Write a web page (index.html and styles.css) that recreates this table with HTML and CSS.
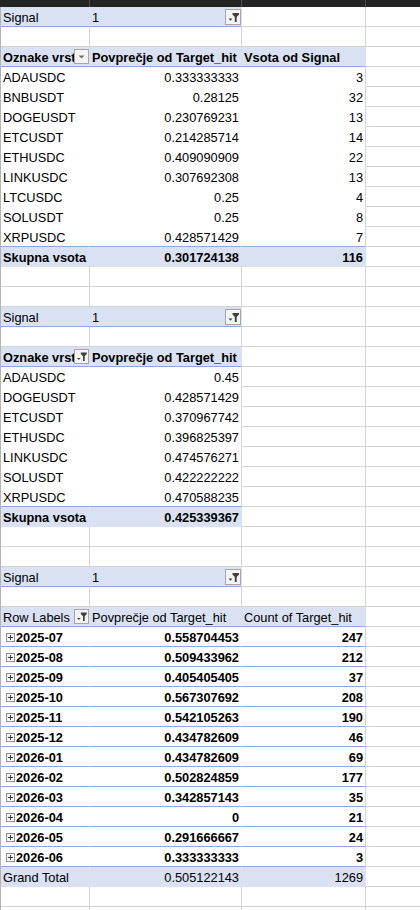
FILE: index.html
```html
<!DOCTYPE html>
<html lang="sl">
<head>
<meta charset="utf-8">
<title>Pivot</title>
<link rel="stylesheet" href="styles.css">
</head>
<body>
<div class="colbar"><span></span><span></span><span></span><span class="last"></span></div>
<div class="sheet">
  <!-- Table 1 -->
  <div class="row"><div class="c fl bl">Signal</div><div class="c fl bl pf"><span>1</span><span class="btn fbtn"><svg width="14" height="14" viewBox="0 0 14 14"><path d="M2.5 8.5h4l-2 2.3z" fill="#404040"/><path d="M6.5 3h6.5v1.6l-2.3 2.4V12H8.8V7L6.5 4.6z" fill="#404040"/></svg></span></div><div class="c"></div><div class="c d"></div></div>
  <div class="row"><div class="c"></div><div class="c"></div><div class="c"></div><div class="c d"></div></div>
  <div class="row"><div class="c fl bl b hdr"><span class="t">Oznake vrstic</span><span class="btn"><svg width="13" height="13" viewBox="0 0 13 13"><path d="M3.5 5.5h6l-3 3z" fill="#6d6d6d"/></svg></span></div><div class="c fl bl b">Povprečje od Target_hit</div><div class="c fl bl b">Vsota od Signal</div><div class="c d"></div></div>
  <div class="row"><div class="c pv">ADAUSDC</div><div class="c pv n">0.333333333</div><div class="c pv end n">3</div><div class="c d"></div></div>
  <div class="row"><div class="c pv">BNBUSDT</div><div class="c pv n">0.28125</div><div class="c pv end n">32</div><div class="c d"></div></div>
  <div class="row"><div class="c pv">DOGEUSDT</div><div class="c pv n">0.230769231</div><div class="c pv end n">13</div><div class="c d"></div></div>
  <div class="row"><div class="c pv">ETCUSDT</div><div class="c pv n">0.214285714</div><div class="c pv end n">14</div><div class="c d"></div></div>
  <div class="row"><div class="c pv">ETHUSDC</div><div class="c pv n">0.409090909</div><div class="c pv end n">22</div><div class="c d"></div></div>
  <div class="row"><div class="c pv">LINKUSDC</div><div class="c pv n">0.307692308</div><div class="c pv end n">13</div><div class="c d"></div></div>
  <div class="row"><div class="c pv">LTCUSDC</div><div class="c pv n">0.25</div><div class="c pv end n">4</div><div class="c d"></div></div>
  <div class="row"><div class="c pv">SOLUSDT</div><div class="c pv n">0.25</div><div class="c pv end n">8</div><div class="c d"></div></div>
  <div class="row"><div class="c pv bl">XRPUSDC</div><div class="c pv bl n">0.428571429</div><div class="c pv bl end n">7</div><div class="c d"></div></div>
  <div class="row"><div class="c fl b">Skupna vsota</div><div class="c fl b n">0.301724138</div><div class="c fl b n">116</div><div class="c d"></div></div>
  <div class="row"><div class="c"></div><div class="c"></div><div class="c"></div><div class="c d"></div></div>
  <div class="row"><div class="c"></div><div class="c"></div><div class="c"></div><div class="c d"></div></div>

  <!-- Table 2 -->
  <div class="row"><div class="c fl bl">Signal</div><div class="c fl bl pf"><span>1</span><span class="btn fbtn"><svg width="14" height="14" viewBox="0 0 14 14"><path d="M2.5 8.5h4l-2 2.3z" fill="#404040"/><path d="M6.5 3h6.5v1.6l-2.3 2.4V12H8.8V7L6.5 4.6z" fill="#404040"/></svg></span></div><div class="c"></div><div class="c d"></div></div>
  <div class="row"><div class="c"></div><div class="c"></div><div class="c"></div><div class="c d"></div></div>
  <div class="row"><div class="c fl bl b hdr"><span class="t">Oznake vrstic</span><span class="btn"><svg width="13" height="13" viewBox="0 0 13 13"><path d="M2 8h3.6l-1.8 2.1z" fill="#404040"/><path d="M5.8 2.5h6v1.5l-2.1 2.2V11H8V6.2L5.8 4z" fill="#404040"/></svg></span></div><div class="c fl bl b">Povprečje od Target_hit</div><div class="c"></div><div class="c d"></div></div>
  <div class="row"><div class="c pv">ADAUSDC</div><div class="c pv end n">0.45</div><div class="c"></div><div class="c d"></div></div>
  <div class="row"><div class="c pv">DOGEUSDT</div><div class="c pv end n">0.428571429</div><div class="c"></div><div class="c d"></div></div>
  <div class="row"><div class="c pv">ETCUSDT</div><div class="c pv end n">0.370967742</div><div class="c"></div><div class="c d"></div></div>
  <div class="row"><div class="c pv">ETHUSDC</div><div class="c pv end n">0.396825397</div><div class="c"></div><div class="c d"></div></div>
  <div class="row"><div class="c pv">LINKUSDC</div><div class="c pv end n">0.474576271</div><div class="c"></div><div class="c d"></div></div>
  <div class="row"><div class="c pv">SOLUSDT</div><div class="c pv end n">0.422222222</div><div class="c"></div><div class="c d"></div></div>
  <div class="row"><div class="c pv bl">XRPUSDC</div><div class="c pv bl end n">0.470588235</div><div class="c"></div><div class="c d"></div></div>
  <div class="row"><div class="c fl b">Skupna vsota</div><div class="c fl b n">0.425339367</div><div class="c"></div><div class="c d"></div></div>
  <div class="row"><div class="c"></div><div class="c"></div><div class="c"></div><div class="c d"></div></div>
  <div class="row"><div class="c"></div><div class="c"></div><div class="c"></div><div class="c d"></div></div>

  <!-- Table 3 -->
  <div class="row"><div class="c fl bl">Signal</div><div class="c fl bl pf"><span>1</span><span class="btn fbtn"><svg width="14" height="14" viewBox="0 0 14 14"><path d="M2.5 8.5h4l-2 2.3z" fill="#404040"/><path d="M6.5 3h6.5v1.6l-2.3 2.4V12H8.8V7L6.5 4.6z" fill="#404040"/></svg></span></div><div class="c"></div><div class="c d"></div></div>
  <div class="row"><div class="c"></div><div class="c"></div><div class="c"></div><div class="c d"></div></div>
  <div class="row"><div class="c fl bl hdr"><span class="t">Row Labels</span><span class="btn"><svg width="13" height="13" viewBox="0 0 13 13"><path d="M2 8h3.6l-1.8 2.1z" fill="#404040"/><path d="M5.8 2.5h6v1.5l-2.1 2.2V11H8V6.2L5.8 4z" fill="#404040"/></svg></span></div><div class="c fl bl">Povprečje od Target_hit</div><div class="c fl bl">Count of Target_hit</div><div class="c d"></div></div>
  <div class="row"><div class="c pv bl b ex"><span class="pm"></span><span>2025-07</span></div><div class="c pv bl b n">0.558704453</div><div class="c pv bl end b n">247</div><div class="c d"></div></div>
  <div class="row"><div class="c pv bl b ex"><span class="pm"></span><span>2025-08</span></div><div class="c pv bl b n">0.509433962</div><div class="c pv bl end b n">212</div><div class="c d"></div></div>
  <div class="row"><div class="c pv bl b ex"><span class="pm"></span><span>2025-09</span></div><div class="c pv bl b n">0.405405405</div><div class="c pv bl end b n">37</div><div class="c d"></div></div>
  <div class="row"><div class="c pv bl b ex"><span class="pm"></span><span>2025-10</span></div><div class="c pv bl b n">0.567307692</div><div class="c pv bl end b n">208</div><div class="c d"></div></div>
  <div class="row"><div class="c pv bl b ex"><span class="pm"></span><span>2025-11</span></div><div class="c pv bl b n">0.542105263</div><div class="c pv bl end b n">190</div><div class="c d"></div></div>
  <div class="row"><div class="c pv bl b ex"><span class="pm"></span><span>2025-12</span></div><div class="c pv bl b n">0.434782609</div><div class="c pv bl end b n">46</div><div class="c d"></div></div>
  <div class="row"><div class="c pv bl b ex"><span class="pm"></span><span>2026-01</span></div><div class="c pv bl b n">0.434782609</div><div class="c pv bl end b n">69</div><div class="c d"></div></div>
  <div class="row"><div class="c pv bl b ex"><span class="pm"></span><span>2026-02</span></div><div class="c pv bl b n">0.502824859</div><div class="c pv bl end b n">177</div><div class="c d"></div></div>
  <div class="row"><div class="c pv bl b ex"><span class="pm"></span><span>2026-03</span></div><div class="c pv bl b n">0.342857143</div><div class="c pv bl end b n">35</div><div class="c d"></div></div>
  <div class="row"><div class="c pv bl b ex"><span class="pm"></span><span>2026-04</span></div><div class="c pv bl b n">0</div><div class="c pv bl end b n">21</div><div class="c d"></div></div>
  <div class="row"><div class="c pv bl b ex"><span class="pm"></span><span>2026-05</span></div><div class="c pv bl b n">0.291666667</div><div class="c pv bl end b n">24</div><div class="c d"></div></div>
  <div class="row"><div class="c pv bl b ex"><span class="pm"></span><span>2026-06</span></div><div class="c pv bl b n">0.333333333</div><div class="c pv bl end b n">3</div><div class="c d"></div></div>
  <div class="row"><div class="c fl">Grand Total</div><div class="c fl n">0.505122143</div><div class="c fl n">1269</div><div class="c d"></div></div>
  <div class="row"><div class="c"></div><div class="c"></div><div class="c"></div><div class="c d"></div></div>
  <div class="row"><div class="c"></div><div class="c"></div><div class="c"></div><div class="c d"></div></div>
</div>
</body>
</html>
```
FILE: styles.css
```css
html, body {
  margin: 0;
  padding: 0;
  background: #fff;
}
body {
  width: 420px;
  height: 910px;
  overflow: hidden;
  font-family: "Liberation Sans", Arial, sans-serif;
  font-size: 12.8px;
  color: #000;
}
.colbar {
  display: grid;
  grid-template-columns: 90px 152px 124px 1fr;
  height: 7px;
  background: #242424;
}
.colbar span {
  border-right: 1px solid #4d4d4d;
}
.colbar span.last {
  border-right: none;
}
.sheet {
  border-left: 1px solid #b4b4b4;
}
.row {
  display: grid;
  grid-template-columns: 89px 152px 124px 1fr;
  height: 20px;
}
.c {
  box-sizing: border-box;
  height: 20px;
  padding: 1px 2px 0 2px;
  line-height: 19px;
  border-right: 1px solid #d4d4d4;
  border-bottom: 1px solid #d4d4d4;
  white-space: nowrap;
  overflow: hidden;
  background: #fff;
}
.c.d {
  border-right: none;
}
.n {
  text-align: right;
}
.b {
  font-weight: bold;
}
.pv {
  border-right-color: transparent;
  border-bottom-color: transparent;
}
.pv.end {
  border-right-color: #d4d4d4;
}
.fl {
  background: #d9e1f2;
  border-right-color: transparent;
  border-bottom-color: transparent;
}
.bl {
  border-bottom-color: #8ea9db;
}
.pf {
  display: flex;
  justify-content: space-between;
  align-items: flex-start;
  padding-right: 0;
}
.hdr {
  display: flex;
  align-items: flex-start;
  padding-right: 0;
}
.hdr .t {
  flex: 1;
  min-width: 0;
  overflow: hidden;
}
.btn {
  flex: none;
  box-sizing: border-box;
  width: 15px;
  height: 15px;
  margin-top: 1px;
  border: 1px solid #a6a6a6;
  background: #f4f4f4;
  display: flex;
  align-items: center;
  justify-content: center;
}
.btn.fbtn {
  width: 16px;
  height: 16px;
}
.btn svg {
  display: block;
}
.ex {
  display: flex;
  align-items: flex-start;
  padding-left: 5px;
}
.pm {
  flex: none;
  position: relative;
  box-sizing: border-box;
  width: 9px;
  height: 9px;
  margin-top: 5px;
  margin-right: 1px;
  border: 1px solid #939393;
  background: #f7f7f7;
}
.pm::before,
.pm::after {
  content: "";
  position: absolute;
  background: #3a3a3a;
}
.pm::before {
  left: 1px;
  top: 3px;
  width: 5px;
  height: 1px;
}
.pm::after {
  left: 3px;
  top: 1px;
  width: 1px;
  height: 5px;
}
```
